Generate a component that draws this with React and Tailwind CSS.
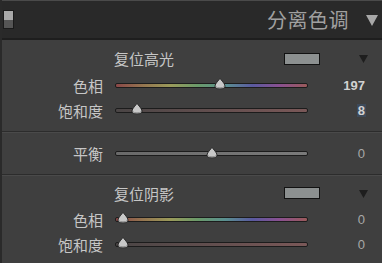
import React from "react";

const FONT = { fontFamily: '"Noto Sans CJK SC", "Noto Sans", sans-serif' };
const NUM = { fontFamily: '"Liberation Sans", Arial, sans-serif' };

function Thumb({ pos }) {
  return (
    <svg
      className="absolute top-1/2 -translate-x-1/2 -translate-y-[62%]"
      style={{ left: `${pos}px` }}
      width="12"
      height="12"
      viewBox="0 0 12 12"
    >
      <path d="M6 0.8 C7 2.5 11 6 11 8.5 C11 10.6 9.5 11.3 6 11.3 C2.5 11.3 1 10.6 1 8.5 C1 6 5 2.5 6 0.8 Z" fill="#c8c8c8" stroke="#1e1e1e" strokeWidth="0.9" />
      <path d="M2 9.2 C3 10.6 9 10.6 10 9.2" fill="none" stroke="#8e8e8e" strokeWidth="1" />
    </svg>
  );
}

function Slider({ kind, value, min, max }) {
  const t = (value - min) / (max - min);
  const pos = 8 + t * 177;
  let track;
  if (kind === "hue") {
    track =
      "bg-[linear-gradient(90deg,#8a4848,#957650,#9a9a5a,#6a9a6a,#5a9090,#5a5aa0,#8a5090,#9a5a5a)]";
  } else if (kind === "sat") {
    track = "bg-[linear-gradient(90deg,#4a4545,#7a5858)]";
  } else {
    track = "bg-[linear-gradient(90deg,#6a6a6a,#7a7a7a)]";
  }
  return (
    <div className="relative w-[193px] h-[12px] flex items-center">
      <div className={`w-full h-[5px] rounded-[2px] border border-[#1c1c1c] ${track}`} />
      <Thumb pos={pos} />
    </div>
  );
}

function Row({ label, kind, value, min, max, h = "h-[25px]", valueClass = "" }) {
  const zero = value === 0;
  return (
    <div className={`flex items-center ${h}`}>
      <div className="w-[101px] text-right text-[15px] leading-none text-[#c6c6c6]" style={FONT}>
        {label}
      </div>
      <div className="ml-[12px]">
        <Slider kind={kind} value={value} min={min} max={max} />
      </div>
      <div className="w-[58px] flex justify-end">
        <span
          className={`text-[13px] leading-none px-[1px] ${zero ? "font-normal text-[#a8a8a8]" : "font-bold text-[#d2d2d2]"} ${valueClass}`}
          style={NUM}
        >
          {value}
        </span>
      </div>
    </div>
  );
}

function Heading({ text, h }) {
  return (
    <div className={`flex items-center ${h}`}>
      <div className="w-[112px]" />
      <div className="text-[15px] leading-none text-[#c6c6c6] w-[170px]" style={FONT}>
        {text}
      </div>
      <div className="w-[36px] h-[12px] bg-[#8c9090] border border-[#121212]" />
      <div className="w-[39px]" />
      <svg width="9" height="9" viewBox="0 0 9 9">
        <path d="M0 1 H9 L4.5 9 Z" fill="#1e1e1e" />
      </svg>
    </div>
  );
}

function Sep() {
  return (
    <div className="flex flex-col shrink-0">
      <div className="h-[1px] bg-[#2c2c2c]" />
      <div className="h-[1px] bg-[#4a4a4a]" />
    </div>
  );
}

export default function App() {
  return (
    <div className="w-[382px] h-[263px] overflow-hidden bg-[#3f3f3f] flex flex-col border-l-[2px] border-[#2a2a2a]">
      <div className="h-[40px] shrink-0 bg-[#292929] border-t border-[#4a4a4a] border-b-[2px] border-b-[#1e1e1e] flex items-center">
        <div className="ml-[1px] w-[11px] h-[19px] border border-[#1a1a1a] flex flex-col">
          <div className="flex-1 bg-[#a8a8a8]" />
          <div className="flex-1 bg-[#555555]" />
        </div>
        <div className="flex-1" />
        <div className="text-[20px] leading-none text-[#a0a0a0] tracking-[0.5px]" style={FONT}>
          分离色调
        </div>
        <svg className="ml-[17px] mr-[4px]" width="12" height="12" viewBox="0 0 12 12">
          <path d="M0 1 H12 L6 12 Z" fill="#a8a8a8" />
        </svg>
      </div>
      <div className="flex flex-col pt-[5px] h-[91px] shrink-0">
        <Heading text="复位高光" h="h-[27px]" />
        <Row label="色相" kind="hue" value={197} min={0} max={360} h="h-[26px]" />
        <Row label="饱和度" kind="sat" value={8} min={0} max={100} h="h-[24px]" valueClass="bg-[#3d4a5a]" />
      </div>
      <Sep />
      <div className="h-[41px] shrink-0 flex items-center">
        <div className="w-full">
          <Row label="平衡" kind="bal" value={0} min={-100} max={100} />
        </div>
      </div>
      <Sep />
      <div className="flex flex-col pt-[4px]">
        <Heading text="复位阴影" h="h-[26px]" />
        <Row label="色相" kind="hue" value={0} min={0} max={360} h="h-[26px]" />
        <Row label="饱和度" kind="sat" value={0} min={0} max={100} h="h-[24px]" />
      </div>
    </div>
  );
}
